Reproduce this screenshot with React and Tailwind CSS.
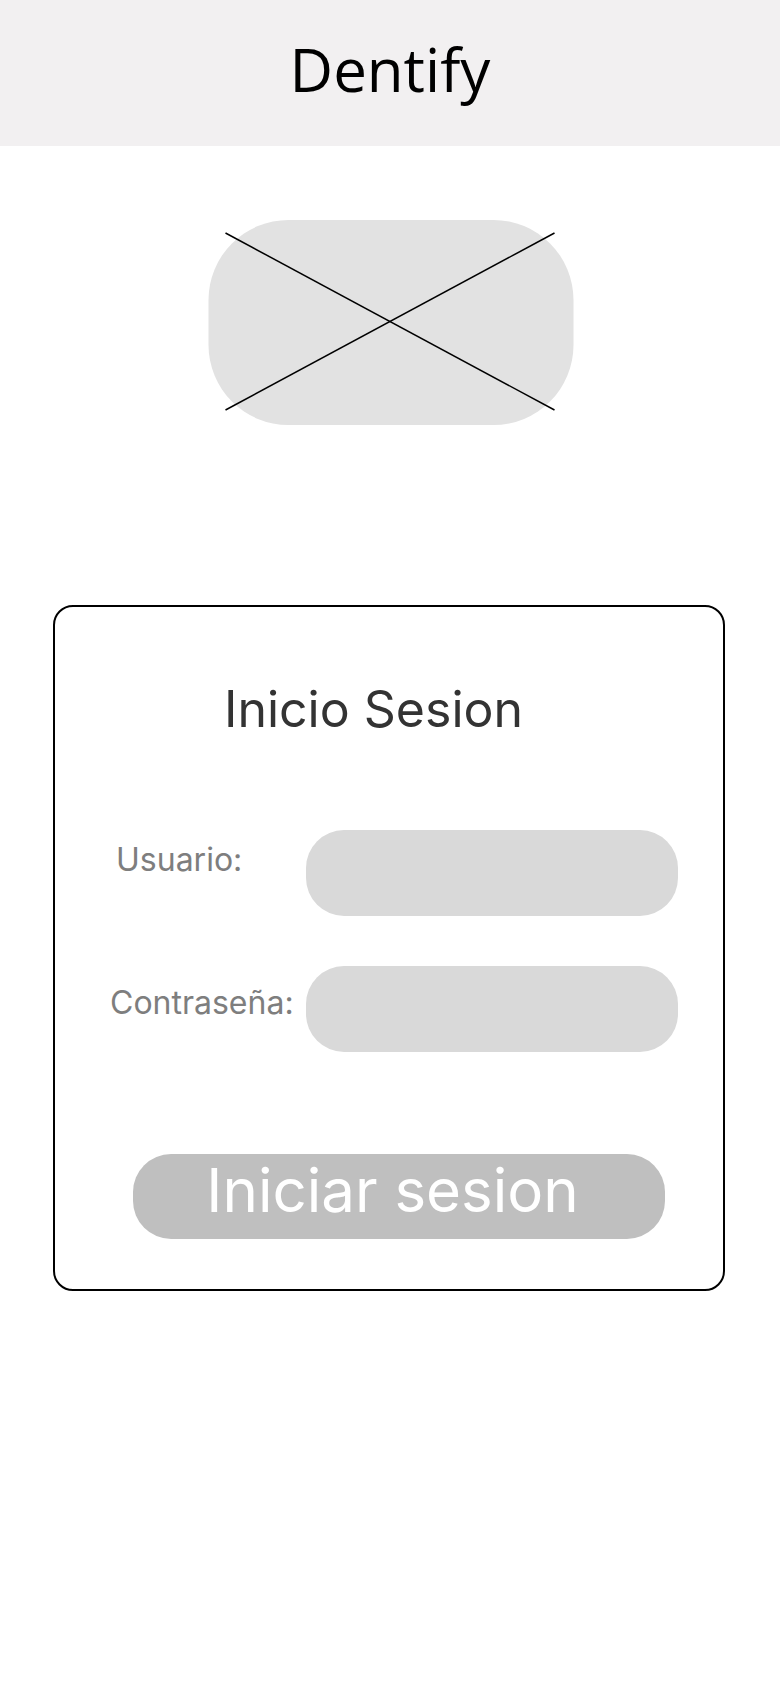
export default function App() {
  return (
    <div className="min-h-[1688px] w-[780px] bg-white">
      {/* top bar */}
      <div className="h-[146px] bg-[#f2f0f1] pt-[39px] text-center">
        <h1 className="font-['Open_Sans',sans-serif] text-[60px] leading-none text-black">
          Dentify
        </h1>
      </div>

      {/* image placeholder */}
      <div className="relative mx-auto mt-[74px] h-[205px] w-[365px] translate-x-[0.5px] rounded-[80px] bg-[#e2e2e2]">
        <svg
          className="absolute left-0 top-0 overflow-visible"
          width="365"
          height="205"
          viewBox="0 0 365 205"
        >
          <line x1="17" y1="13" x2="346" y2="190" stroke="#000" strokeWidth="1.5" />
          <line x1="17" y1="190" x2="346" y2="13" stroke="#000" strokeWidth="1.5" />
        </svg>
      </div>

      {/* login card */}
      <div className="ml-[53px] mt-[180px] h-[686px] w-[672px] rounded-[20px] border-2 border-black pt-[77px] font-['Inter',sans-serif]">
        <h2 className="pr-[31px] text-center text-[50px] leading-none text-[#333333]">
          Inicio Sesion
        </h2>

        <div className="mt-[96px] flex items-start">
          <div className="w-[251px] shrink-0 pl-[61px] pt-[14px]">
            <span className="text-[32px] leading-none text-[#7e7e7e]">Usuario:</span>
          </div>
          <div className="h-[86px] w-[372px] shrink-0 rounded-[38px] bg-[#d9d9d9]" />
        </div>

        <div className="mt-[50px] flex items-start">
          <div className="w-[251px] shrink-0 pl-[55px] pt-[21px]">
            <span className="text-[32px] leading-none text-[#7e7e7e]">Contraseña:</span>
          </div>
          <div className="h-[86px] w-[372px] shrink-0 rounded-[38px] bg-[#d9d9d9]" />
        </div>

        <button
          type="button"
          className="ml-[78px] mt-[102px] flex h-[85px] w-[532px] items-start justify-center rounded-[38px] bg-[#bfbfbf] pr-[13px] pt-[6px] text-[60px] leading-none text-white"
        >
          Iniciar sesion
        </button>
      </div>
    </div>
  );
}
